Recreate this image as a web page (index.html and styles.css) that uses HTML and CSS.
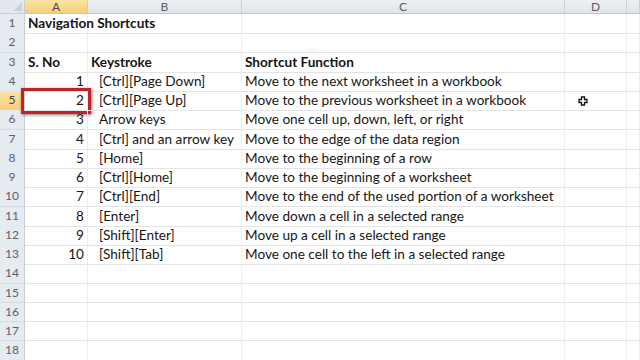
FILE: index.html
```html
<!DOCTYPE html>
<html lang="en">
<head>
    <meta charset="UTF-8">
    <title>Navigation Shortcuts</title>
    <link rel="stylesheet" href="styles.css">
</head>
<body>
    <div class="sheet">
        <div class="row head">
            <div class="corner"><span class="tri"></span></div>
            <div class="col sel">A</div>
            <div class="col">B</div>
            <div class="col">C</div>
            <div class="col">D</div>
            <div class="col"></div>
        </div>
        <div class="row"><div class="num">1</div><div class="cell b wide">Navigation Shortcuts</div><div class="cell"></div><div class="cell"></div><div class="cell"></div><div class="cell"></div></div>
        <div class="row"><div class="num">2</div><div class="cell"></div><div class="cell"></div><div class="cell"></div><div class="cell"></div><div class="cell"></div></div>
        <div class="row"><div class="num">3</div><div class="cell b">S. No</div><div class="cell b">Keystroke</div><div class="cell b">Shortcut Function</div><div class="cell"></div><div class="cell"></div></div>
        <div class="row"><div class="num">4</div><div class="cell r">1</div><div class="cell k">[Ctrl][Page Down]</div><div class="cell">Move to the next worksheet in a workbook</div><div class="cell"></div><div class="cell"></div></div>
        <div class="row"><div class="num sel">5</div><div class="cell r active">2<span class="box"></span></div><div class="cell k">[Ctrl][Page Up]</div><div class="cell">Move to the previous worksheet in a workbook</div><div class="cell pin"><svg class="cursor" width="10" height="10" viewBox="0 0 10 10"><path d="M3.5 1h3v2.5h2.5v3h-2.5v2.5h-3v-2.5h-2.5v-3h2.5z" fill="#fff" stroke="#111" stroke-width="1.3"/></svg></div><div class="cell"></div></div>
        <div class="row"><div class="num">6</div><div class="cell r">3</div><div class="cell k">Arrow keys</div><div class="cell">Move one cell up, down, left, or right</div><div class="cell"></div><div class="cell"></div></div>
        <div class="row"><div class="num">7</div><div class="cell r">4</div><div class="cell k">[Ctrl] and an arrow key</div><div class="cell">Move to the edge of the data region</div><div class="cell"></div><div class="cell"></div></div>
        <div class="row"><div class="num">8</div><div class="cell r">5</div><div class="cell k">[Home]</div><div class="cell">Move to the beginning of a row</div><div class="cell"></div><div class="cell"></div></div>
        <div class="row"><div class="num">9</div><div class="cell r">6</div><div class="cell k">[Ctrl][Home]</div><div class="cell">Move to the beginning of a worksheet</div><div class="cell"></div><div class="cell"></div></div>
        <div class="row"><div class="num">10</div><div class="cell r">7</div><div class="cell k">[Ctrl][End]</div><div class="cell">Move to the end of the used portion of a worksheet</div><div class="cell"></div><div class="cell"></div></div>
        <div class="row"><div class="num">11</div><div class="cell r">8</div><div class="cell k">[Enter]</div><div class="cell">Move down a cell in a selected range</div><div class="cell"></div><div class="cell"></div></div>
        <div class="row"><div class="num">12</div><div class="cell r">9</div><div class="cell k">[Shift][Enter]</div><div class="cell">Move up a cell in a selected range</div><div class="cell"></div><div class="cell"></div></div>
        <div class="row"><div class="num">13</div><div class="cell r">10</div><div class="cell k">[Shift][Tab]</div><div class="cell">Move one cell to the left in a selected range</div><div class="cell"></div><div class="cell"></div></div>
        <div class="row"><div class="num">14</div><div class="cell"></div><div class="cell"></div><div class="cell"></div><div class="cell"></div><div class="cell"></div></div>
        <div class="row"><div class="num">15</div><div class="cell"></div><div class="cell"></div><div class="cell"></div><div class="cell"></div><div class="cell"></div></div>
        <div class="row"><div class="num">16</div><div class="cell"></div><div class="cell"></div><div class="cell"></div><div class="cell"></div><div class="cell"></div></div>
        <div class="row"><div class="num">17</div><div class="cell"></div><div class="cell"></div><div class="cell"></div><div class="cell"></div><div class="cell"></div></div>
        <div class="row"><div class="num">18</div><div class="cell"></div><div class="cell"></div><div class="cell"></div><div class="cell"></div><div class="cell"></div></div>
    </div>
</body>
</html>
```
FILE: styles.css
```css
body {
    margin: 0;
    background: #ffffff;
    font-family: Lato, "Open Sans", sans-serif;
    color: #1c1c1c;
    overflow: hidden;
}
.sheet {
    width: 640px;
    height: 360px;
    overflow: hidden;
}
.row {
    display: grid;
    grid-template-columns: 25px 63px 154px 323px 62px 1fr;
    height: 19.25px;
    box-sizing: border-box;
}
.row.head {
    height: 14px;
}
.corner {
    background: #e3e7ee;
    border-right: 1px solid #c9ced6;
    border-bottom: 1px solid #c9ced6;
    position: relative;
}
.tri {
    position: absolute;
    right: 2px;
    bottom: 2px;
    width: 0;
    height: 0;
    border-left: 9px solid transparent;
    border-bottom: 9px solid #cdd2da;
}
.col {
    background: linear-gradient(#eef0f4, #e0e4ea);
    border-right: 1px solid #ccd1d9;
    border-bottom: 1px solid #c2c7cf;
    color: #5a5f66;
    font-size: 12px;
    line-height: 13px;
    text-align: center;
}
.col.sel {
    background: linear-gradient(#fbe3a4, #f6cf7a);
    color: #4b4b4b;
}
.num {
    background: #e6eaf1;
    border-right: 1px solid #c9ced6;
    border-bottom: 1px solid #d6dbe3;
    color: #5c6169;
    font-size: 12px;
    line-height: 18px;
    text-align: center;
}
.num.sel {
    background: linear-gradient(#fbe3a4, #f6cf7a);
    color: #444;
}
.cell {
    border-right: 1px solid #eceef0;
    border-bottom: 1px solid #e2e4e6;
    font-size: 13.6px;
    line-height: 19px;
    padding: 0 3px;
    white-space: nowrap;
    position: relative;
    color: #161616;
}
.cell.b {
    font-weight: bold;
}
.cell.wide {
    overflow: visible;
    z-index: 1;
}
.cell.r {
    text-align: right;
}
.cell.k {
    padding-left: 11px;
}
.box {
    position: absolute;
    left: -4px;
    top: -3px;
    right: -4px;
    bottom: -4px;
    border: 3px solid #c0222a;
    box-shadow: 1px 1px 3px rgba(60, 0, 0, 0.55);
}
.cursor {
    position: absolute;
    left: 13px;
    top: 5px;
}
```
